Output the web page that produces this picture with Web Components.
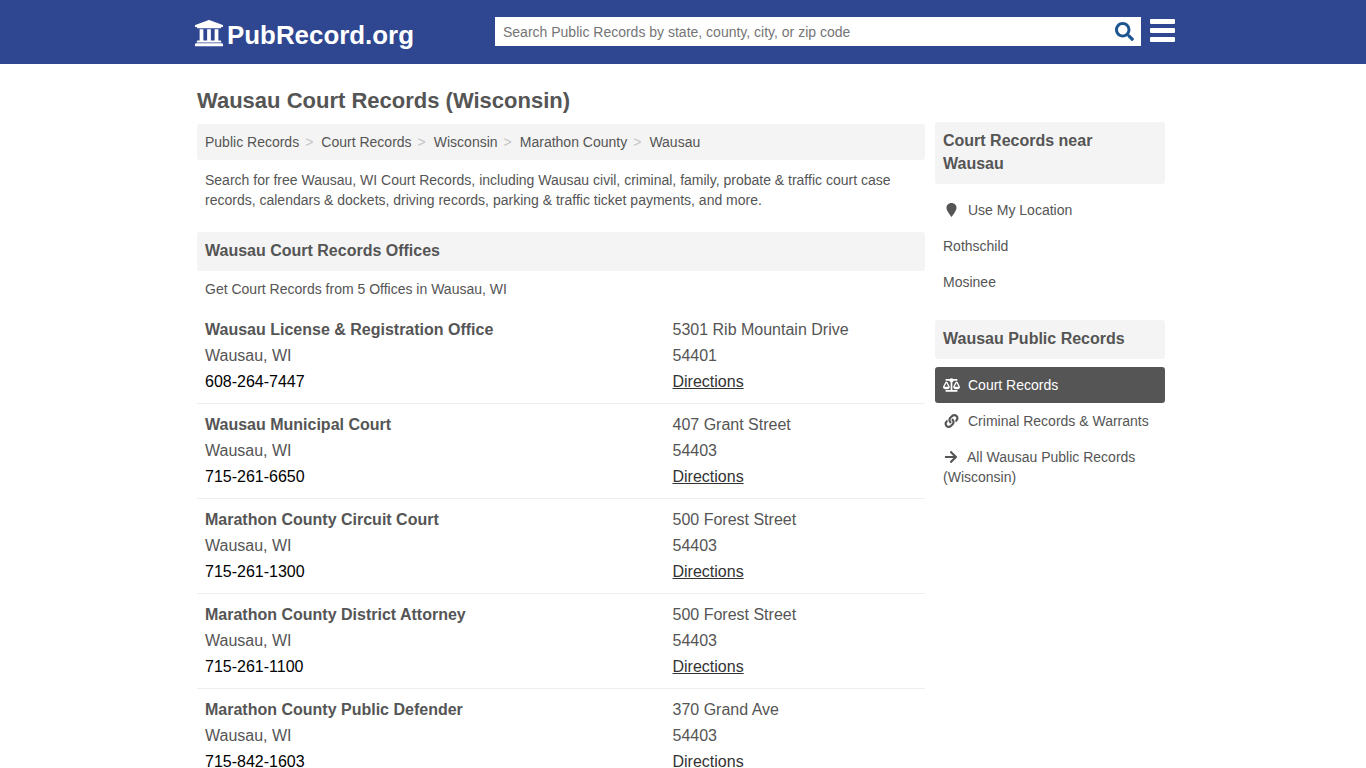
<!DOCTYPE html>
<html lang="en">
<head>
<meta charset="utf-8">
<title>Wausau Court Records (Wisconsin)</title>
<style>
    html, body { margin: 0; background: #fff; }
    body { font-family: "Liberation Sans", Arial, sans-serif; color: #555; }
</style>
</head>
<body>
<pr-header></pr-header>
<pr-page>
    <pr-title slot="title">Wausau Court Records (Wisconsin)</pr-title>

    <pr-breadcrumb slot="main" items="Public Records|Court Records|Wisconsin|Marathon County|Wausau"></pr-breadcrumb>
    <pr-intro slot="main">Search for free Wausau, WI Court Records, including Wausau civil, criminal, family, probate &amp; traffic court case records, calendars &amp; dockets, driving records, parking &amp; traffic ticket payments, and more.</pr-intro>
    <pr-heading slot="main" kind="offices">Wausau Court Records Offices</pr-heading>
    <pr-note slot="main">Get Court Records from 5 Offices in Wausau, WI</pr-note>
    <pr-office slot="main" name="Wausau License &amp; Registration Office" city="Wausau, WI" phone="608-264-7447" street="5301 Rib Mountain Drive" zip="54401"></pr-office>
    <pr-office slot="main" name="Wausau Municipal Court" city="Wausau, WI" phone="715-261-6650" street="407 Grant Street" zip="54403"></pr-office>
    <pr-office slot="main" name="Marathon County Circuit Court" city="Wausau, WI" phone="715-261-1300" street="500 Forest Street" zip="54403"></pr-office>
    <pr-office slot="main" name="Marathon County District Attorney" city="Wausau, WI" phone="715-261-1100" street="500 Forest Street" zip="54403"></pr-office>
    <pr-office slot="main" name="Marathon County Public Defender" city="Wausau, WI" phone="715-842-1603" street="370 Grand Ave" zip="54403" last></pr-office>

    <pr-heading slot="side" kind="near">Court Records near Wausau</pr-heading>
    <pr-side-link slot="side" icon="pin">Use My Location</pr-side-link>
    <pr-side-link slot="side">Rothschild</pr-side-link>
    <pr-side-link slot="side">Mosinee</pr-side-link>
    <pr-heading slot="side" kind="public">Wausau Public Records</pr-heading>
    <pr-side-link slot="side" icon="scale" active>Court Records</pr-side-link>
    <pr-side-link slot="side" icon="link">Criminal Records &amp; Warrants</pr-side-link>
    <pr-side-link slot="side" icon="arrow">All Wausau Public Records (Wisconsin)</pr-side-link>
</pr-page>

<script>
const ICONS = {
    bank: '<svg viewBox="0 0 512 512"><path d="M496 128v16a8 8 0 0 1-8 8h-24v12c0 6.627-5.373 12-12 12H60c-6.627 0-12-5.373-12-12v-12H24a8 8 0 0 1-8-8v-16a8 8 0 0 1 4.941-7.392l232-88a7.996 7.996 0 0 1 6.118 0l232 88A8 8 0 0 1 496 128zm-24 304H40c-13.255 0-24 10.745-24 24v16a8 8 0 0 0 8 8h464a8 8 0 0 0 8-8v-16c0-13.255-10.745-24-24-24zM96 192v192H60c-6.627 0-12 5.373-12 12v20h416v-20c0-6.627-5.373-12-12-12h-36V192h-64v192h-64V192h-64v192h-64V192H96z"/></svg>',
    search: '<svg viewBox="0 0 512 512"><path d="M505 442.7L405.3 343c-4.5-4.5-10.6-7-17-7H372c27.6-35.3 44-79.7 44-128C416 93.1 322.9 0 208 0S0 93.1 0 208s93.1 208 208 208c48.3 0 92.7-16.4 128-44v16.3c0 6.4 2.5 12.5 7 17l99.7 99.7c9.4 9.4 24.6 9.4 33.9 0l28.3-28.3c9.4-9.4 9.4-24.6.1-34zM208 336c-70.7 0-128-57.2-128-128 0-70.7 57.2-128 128-128 70.7 0 128 57.2 128 128 0 70.7-57.2 128-128 128z"/></svg>',
    pin: '<svg viewBox="0 0 384 512"><path d="M192 0C86 0 8 78 8 176c0 58 26 104 62 160 36 55 84 118 122 176 38-58 86-121 122-176 36-56 62-102 62-160C376 78 298 0 192 0z"/></svg>',
    scale: '<svg viewBox="0 0 640 512"><path d="M256 336h-.02c0-16.18 1.34-8.73-85.05-181.51-17.65-35.29-68.19-35.36-85.87 0C-2.06 328.75.02 320.33.02 336H0c0 44.18 57.31 80 128 80s128-35.82 128-80zM128 176l72 144H56l72-144zm511.98 160c0-16.18 1.34-8.73-85.05-181.51-17.65-35.29-68.19-35.36-85.87 0-87.12 174.26-85.04 165.84-85.04 181.51H384c0 44.18 57.31 80 128 80s128-35.82 128-80h-.02zM440 320l72-144 72 144H440zm88 128H352V153.25c23.51-10.29 41.16-31.48 46.39-57.25H528c8.84 0 16-7.16 16-16V48c0-8.84-7.16-16-16-16H383.64C369.04 12.68 346.09 0 320 0s-49.04 12.68-63.64 32H112c-8.84 0-16 7.16-16 16v32c0 8.84 7.16 16 16 16h129.61c5.23 25.76 22.87 46.96 46.39 57.25V448H112c-8.84 0-16 7.16-16 16v32c0 8.84 7.16 16 16 16h416c8.84 0 16-7.16 16-16v-32c0-8.84-7.16-16-16-16z"/></svg>',
    link: '<svg viewBox="0 0 512 512"><path d="M326.612 185.391c59.747 59.809 58.927 155.698.36 214.59-.11.12-.24.25-.36.37l-67.2 67.2c-59.27 59.27-155.699 59.262-214.96 0-59.27-59.26-59.27-155.7 0-214.96l37.106-37.106c9.84-9.84 26.786-3.3 27.294 10.606.648 17.722 3.826 35.527 9.69 52.721 1.986 5.822.567 12.262-3.783 16.612l-13.087 13.087c-28.026 28.026-28.905 73.66-1.155 101.96 28.024 28.579 74.086 28.749 102.325.51l67.2-67.19c28.191-28.191 28.073-73.757 0-101.83-3.701-3.694-7.429-6.564-10.341-8.569a16.037 16.037 0 0 1-6.947-12.606c-.396-10.567 3.348-21.456 11.698-29.806l21.054-21.055c5.521-5.521 14.182-6.199 20.584-1.731a152.482 152.482 0 0 1 20.522 17.197zM467.547 44.449c-59.261-59.262-155.69-59.27-214.96 0l-67.2 67.2c-.12.12-.25.25-.36.37-58.566 58.892-59.387 154.781.36 214.59a152.454 152.454 0 0 0 20.521 17.196c6.402 4.468 15.064 3.789 20.584-1.731l21.054-21.055c8.35-8.35 12.094-19.239 11.698-29.806a16.037 16.037 0 0 0-6.947-12.606c-2.912-2.005-6.64-4.875-10.341-8.569-28.073-28.073-28.191-73.639 0-101.83l67.2-67.19c28.239-28.239 74.3-28.069 102.325.51 27.75 28.3 26.872 73.934-1.155 101.96l-13.087 13.087c-4.35 4.35-5.769 10.79-3.783 16.612 5.864 17.194 9.042 34.999 9.69 52.721.509 13.906 17.454 20.446 27.294 10.606l37.106-37.106c59.271-59.259 59.271-155.699.001-214.959z"/></svg>',
    arrow: '<svg viewBox="0 0 448 512"><path d="M190.5 66.9l22.2-22.2c9.4-9.4 24.6-9.4 33.9 0L441 239c9.4 9.4 9.4 24.6 0 33.9L246.6 467.3c-9.4 9.4-24.6 9.4-33.9 0l-22.2-22.2c-9.5-9.5-9.3-25 .4-34.3L311.4 296H24c-13.3 0-24-10.7-24-24v-32c0-13.3 10.7-24 24-24h287.4L190.9 101.2c-9.8-9.3-10-24.8-.4-34.3z"/></svg>',
};

// small helper so each element only writes its markup and styles
class PrBase extends HTMLElement {
    render(html) {
        this.attachShadow({ mode: 'open' }).innerHTML = html;
    }
}

customElements.define('pr-header', class extends PrBase {
    connectedCallback() {
        this.render(`
            <style>
                :host { display: block; height: 64px; background: #2e4790; }
                .wrap { width: 980px; height: 64px; margin-left: 195px; display: flex; }
                .logo { display: flex; align-items: center; flex: none; width: 300px; height: 70px; color: #fff; text-decoration: none;
                    font-size: 25.9px; font-weight: bold; }
                .logo svg { flex: none; width: 30px; height: 30px; fill: #fff; margin: -4px 3px 0 -1px; }
                .search { width: 646px; height: 29px; margin-top: 17px; background: #fff; display: flex; align-items: center; box-sizing: border-box; padding: 0 8px; }
                .search input { flex: 1; border: 0; outline: 0; padding: 0; font: 14px "Liberation Sans", Arial, sans-serif; color: #555; background: transparent; }
                .search input::placeholder { color: #757575; opacity: 1; }
                .search svg { width: 19px; height: 19px; fill: #1c5590; margin-right: -1px; }
                .menu { width: 25px; margin: 19px 0 0 9px; display: flex; flex-direction: column; gap: 4px; }
                .menu i { display: block; height: 5px; background: #fff; border-radius: 1px; }
            </style>
            <div class="wrap">
                <a class="logo" href="#">${ICONS.bank}<span>PubRecord.org</span></a>
                <div class="search">
                    <input type="text" placeholder="Search Public Records by state, county, city, or zip code">
                    ${ICONS.search}
                </div>
                <div class="menu"><i></i><i></i><i></i></div>
            </div>
        `);
    }
});

customElements.define('pr-page', class extends PrBase {
    connectedCallback() {
        this.render(`
            <style>
                :host { display: block; width: 968px; margin-left: 197px; padding-top: 24px; }
                .cols { display: flex; gap: 10px; margin-top: 8px; }
                .main { width: 728px; flex: none; padding-top: 2px; }
                .side { width: 230px; flex: none; }
            </style>
            <slot name="title"></slot>
            <div class="cols">
                <div class="main"><slot name="main"></slot></div>
                <div class="side"><slot name="side"></slot></div>
            </div>
        `);
    }
});

customElements.define('pr-title', class extends PrBase {
    connectedCallback() {
        this.render(`
            <style>
                :host { display: block; font-size: 22px; line-height: 26px; font-weight: bold; color: #555; }
            </style>
            <slot></slot>
        `);
    }
});

customElements.define('pr-breadcrumb', class extends PrBase {
    connectedCallback() {
        let items = this.getAttribute('items').split('|');
        let html = items.map(s => '<a href="#">' + s + '</a>').join('<span>&gt;</span>');
        this.render(`
            <style>
                :host { display: block; height: 36px; background: #f4f4f4; border-radius: 3px; padding: 0 8px; box-sizing: border-box;
                    font-size: 14px; line-height: 36px; }
                a { color: #555; text-decoration: none; }
                span { color: #c4c4c4; margin: 0 8px 0 6px; }
            </style>
            ${html}
        `);
    }
});

customElements.define('pr-intro', class extends PrBase {
    connectedCallback() {
        this.render(`
            <style>
                :host { display: block; padding: 10px 8px 0; font-size: 14px; line-height: 20px; color: #555; height: 62px; box-sizing: border-box; }
            </style>
            <slot></slot>
        `);
    }
});

customElements.define('pr-heading', class extends PrBase {
    connectedCallback() {
        let kind = this.getAttribute('kind');
        let extra = {
            offices: 'margin-top: 10px; padding: 9px 8px 10px; line-height: 20px;',
            near: 'margin-bottom: 8px; padding: 7px 8px 9px; line-height: 23px;',
            public: 'margin-top: 20px; margin-bottom: 8px; padding: 7px 8px 9px; line-height: 23px;',
        }[kind];
        this.render(`
            <style>
                :host { display: block; background: #f4f4f4; border-radius: 3px; font-weight: bold; color: #555; font-size: 16px; ${extra} }
            </style>
            <slot></slot>
        `);
    }
});

customElements.define('pr-note', class extends PrBase {
    connectedCallback() {
        this.render(`
            <style>
                :host { display: block; padding: 8px 8px 0; height: 30px; font-size: 14px; line-height: 20px; color: #555; }
            </style>
            <slot></slot>
        `);
    }
});

customElements.define('pr-office', class extends PrBase {
    connectedCallback() {
        let a = n => this.getAttribute(n);
        this.render(`
            <style>
                :host { display: block; box-sizing: border-box; height: 95px; padding: 8px 8px 0; font-size: 16px; line-height: 26px; color: #555; }
                :host(:not([last])) { border-bottom: 1px solid #eee; }
                .grid { display: grid; grid-template-columns: 467.5px 1fr; }
                b { display: block; }
                .tel { color: #000; }
                a { color: #333; text-decoration: underline; }
                div div { white-space: nowrap; }
            </style>
            <div class="grid">
                <div><b>${a('name').replace('&', '&amp;')}</b><div>${a('city')}</div><div class="tel">${a('phone')}</div></div>
                <div><div>${a('street')}</div><div>${a('zip')}</div><div><a href="#">Directions</a></div></div>
            </div>
        `);
    }
});

customElements.define('pr-side-link', class extends PrBase {
    connectedCallback() {
        let icon = this.getAttribute('icon');
        let active = this.hasAttribute('active');
        let w = { pin: 17, scale: 17, link: 17, arrow: 16 }[icon];
        let cls = icon ? 'ic ' + icon : '';
        this.render(`
            <style>
                :host { display: block; padding: 8px; font-size: 14px; line-height: 20px; color: #555; border-radius: 3px; }
                :host([active]) { background: #555; color: #fff; }
                .ic { display: inline-block; width: ${w}px; height: 14px; margin-right: 8px; vertical-align: -2px; }
                .ic svg { display: block; height: 14px; width: 100%; fill: ${active ? '#fff' : '#555'}; }
            </style>
            ${icon ? '<span class="' + cls + '">' + ICONS[icon] + '</span>' : ''}<slot></slot>
        `);
    }
});
</script>
</body>
</html>
